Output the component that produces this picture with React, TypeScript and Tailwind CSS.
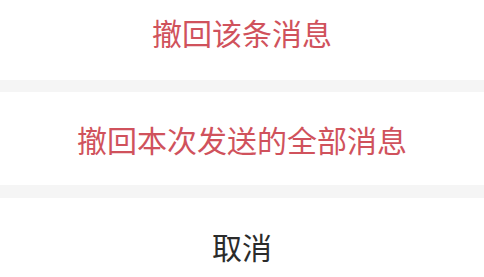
import React from "react";

export default function App() {
  const font = { fontFamily: '"Noto Sans CJK SC", "Noto Sans", sans-serif' };
  return (
    <div className="w-[484px] h-[277px] bg-white flex flex-col overflow-hidden" style={font}>
      <div className="h-[80px] flex items-center justify-center pb-[17px]">
        <span className="text-[30px] leading-none text-[#d0525c]">撤回该条消息</span>
      </div>
      <div className="h-[12px] bg-[#f5f5f5]" />
      <div className="h-[93px] flex items-center justify-center">
        <span className="text-[30px] leading-none text-[#d0525c]">撤回本次发送的全部消息</span>
      </div>
      <div className="h-[13px] bg-[#f5f5f5]" />
      <div className="flex-1 flex items-start justify-center pt-[33px]">
        <span className="text-[30px] leading-none text-[#2b2b2b]">取消</span>
      </div>
    </div>
  );
}
